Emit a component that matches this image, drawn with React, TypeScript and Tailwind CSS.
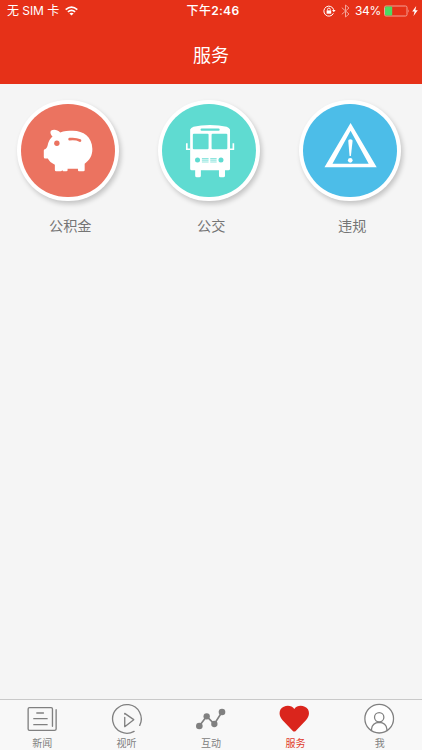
import type { ReactNode } from "react";

const services = [
  { label: "公积金", color: "bg-[#eb7360]", icon: <PiggyIcon /> },
  { label: "公交", color: "bg-[#5fdbd1]", icon: <BusIcon /> },
  { label: "违规", color: "bg-[#4cbde8]", icon: <WarningIcon /> },
];

const tabs = [
  { label: "新闻", icon: <NewsIcon /> },
  { label: "视听", icon: <PlayIcon /> },
  { label: "互动", icon: <ChartIcon /> },
  { label: "服务", icon: <HeartIcon />, active: true },
  { label: "我", icon: <UserIcon /> },
];

function PiggyIcon() {
  return (
    <svg viewBox="20 24 306 303" className="h-full w-full">
      <path
        fill="#fff"
        d="M121 116C128 111 141 112 149 121C160 117 173 116 187 116C218 116 244 134 245 170C245 190 237 203 222 214V234Q222 237 218 237H205Q202 237 202 233V229H171V234Q171 237 167 237H159Q156 237 155 233Q154 237 150 237H137Q133 237 133 233V217C122 212 116 207 112 199H104Q100 199 100 194V175Q100 171 105 170C110 167 111 161 113 153C116 144 121 138 126 133C121 129 118 121 121 116Z"
      />
      <circle cx="139" cy="153" r="8" fill="#eb7360" />
      <path d="M177 141Q196 139 208 145" fill="none" stroke="#eb7360" strokeWidth="8" strokeLinecap="round" />
    </svg>
  );
}

function BusIcon() {
  return (
    <svg viewBox="20 24 306 303" className="h-full w-full">
      <path
        fill="#fff"
        d="M116 112Q118 107 126 104Q147 99 175 99Q203 99 225 104Q233 107 235 112V229Q235 234 230 234H220V250Q220 255 215 255H207Q202 255 202 250V234H148V250Q148 255 143 255H136Q131 255 131 250V234H121Q116 234 116 229Z"
      />
      <path d="M116 171H106V153M235 171H245V153" fill="none" stroke="#fff" strokeWidth="5" />
      <g fill="#5fdbd1">
        <rect x="147" y="109" width="57" height="7" rx="3" />
        <rect x="124" y="125" width="47" height="46" rx="3" />
        <rect x="180" y="125" width="47" height="46" rx="3" />
        <circle cx="138" cy="203" r="7.5" />
        <circle cx="208" cy="203" r="7.5" />
      </g>
      <path
        d="M151 199H171M151 204H171M151 209H171M176 199H195M176 204H195M176 209H195"
        stroke="#8fe5de"
        strokeWidth="3.5"
      />
    </svg>
  );
}

function WarningIcon() {
  return (
    <svg viewBox="20 24 306 303" className="h-full w-full">
      <path fill="#fff" fillRule="evenodd" d="M174 93L252 225H96ZM174 116L120 214H228Z" />
      <path fill="#fff" d="M167 146Q167 141 173 141Q180 141 180 146L175 191H171Z" />
      <circle cx="173" cy="204" r="7" fill="#fff" />
    </svg>
  );
}

function NewsIcon() {
  return (
    <svg viewBox="78.6 24 96 96" className="size-8" fill="none" stroke="currentColor" strokeWidth="4" strokeLinecap="round">
      <path d="M169 44V102Q169 106 164 106H89Q85 106 85 102V42Q85 38 89 38H154Q158 38 158 42V94" strokeLinejoin="round" />
      <path d="M111 54H131M102 71H142M102 89H142" />
    </svg>
  );
}

function PlayIcon() {
  return (
    <svg viewBox="331.8 24 96 96" className="size-8" fill="none" stroke="currentColor" strokeWidth="4" strokeLinecap="round">
      <path d="M401 109A43 43 0 1 1 418 91" />
      <path d="M373 67V95L400 74L373 55V57" strokeLinejoin="round" />
    </svg>
  );
}

function ChartIcon() {
  return (
    <svg viewBox="195 24 96 96" className="size-8" fill="currentColor">
      <path d="M208 93L230 64L253 87L276 51" fill="none" stroke="currentColor" strokeWidth="5" />
      <circle cx="208" cy="93" r="10" />
      <circle cx="230" cy="64" r="9.5" />
      <circle cx="253" cy="87" r="9.5" />
      <circle cx="276" cy="51" r="10" />
    </svg>
  );
}

function HeartIcon() {
  return (
    <svg viewBox="28.2 24 96 96" className="size-8" fill="#da251c">
      <path d="M74 42C65 28 42 30 33 43C27 54 30 66 39 76L69 107Q74 112 79 107L109 76C118 66 121 54 115 43C106 30 83 28 74 42Z" />
    </svg>
  );
}

function UserIcon() {
  return (
    <svg viewBox="281.4 24 96 96" className="size-8" fill="none" stroke="currentColor" strokeWidth="3.8">
      <circle cx="327" cy="71" r="43" fill="#fff" />
      <circle cx="327" cy="67" r="14" />
      <path d="M304 107V102Q306 83 327 82Q348 83 350 102V107" />
    </svg>
  );
}

function StatusBar() {
  return (
    <div className="grid h-[22px] grid-cols-[1fr_auto_1fr] items-center pl-[7px] pr-1 text-[12px] leading-none">
      <div className="flex items-center gap-[6px]">
        <span className="whitespace-pre text-[12px] tracking-[-0.05px]">无 SIM 卡</span>
        <svg viewBox="0 0 13 10" className="h-[10px] w-[13px]" fill="none" stroke="#fff" strokeWidth="1.7">
          <path d="M.7 3.6Q6.5-1.5 12.3 3.6M2.9 5.9Q6.5 2.7 10.1 5.9" />
          <path d="M6.5 9.5L4.4 7.5Q6.5 5.8 8.6 7.5Z" fill="#fff" stroke="none" />
        </svg>
      </div>
      <span className="pl-px font-medium tracking-[0.3px]">
        下午<b className="font-semibold">2:46</b>
      </span>
      <div className="flex items-center justify-end">
        <svg viewBox="0 0 13 12" className="h-3 w-[13px]" fill="none" stroke="#fff">
          <path d="M10.4 8.3A5 5 0 1 1 10.7 4.8" />
          <path d="M9 5H12.6L10.8 7.3Z" fill="#fff" stroke="none" />
          <rect x="3.6" y="5.4" width="4.6" height="3.3" fill="#fff" stroke="none" />
          <path d="M4.5 5.5V4.4Q4.5 3.1 5.9 3.1Q7.3 3.1 7.3 4.4V5.5" strokeWidth=".9" />
        </svg>
        <svg viewBox="0 0 9 14" className="ml-[5px] h-[14px] w-[9px] opacity-55" fill="none" stroke="#fff">
          <path d="M.8 3.7L8 10L4.5 13V1L8 4L.8 10.3" />
        </svg>
        <span className="ml-[5px] text-[12px] tracking-[-0.3px]">34%</span>
        <svg viewBox="0 0 26 12" className="ml-[3px] h-3 w-[26px]">
          <rect x=".5" y="1" width="22.5" height="10" rx="1.5" fill="none" stroke="#f3a095" />
          <rect x="1" y="1.5" width="7.2" height="9" rx="1" fill="#4cd964" />
          <path d="M24 4.3Q25.5 6 24 7.7Z" fill="#f3a095" />
        </svg>
        <svg viewBox="0 0 6 10" className="ml-[2px] h-[10px] w-[6px]" fill="#fff">
          <path d="M4.2 0L.2 5.5H2.6L1.5 10L5.8 4.2H3.4Z" />
        </svg>
      </div>
    </div>
  );
}

function ServiceItem({ label, color, icon }: { label: string; color: string; icon: ReactNode }) {
  return (
    <div className="flex flex-col items-center">
      <div className="mr-[5.5px] grid h-[101px] w-[102.5px] rounded-full bg-white shadow-[2px_3px_5px_rgba(0,0,0,0.2)]">
        <div className="col-start-1 row-start-1 p-1">
          <div className={`h-full w-full rounded-full ${color}`} />
        </div>
        <div className="col-start-1 row-start-1">{icon}</div>
      </div>
      <span className="mr-[0.5px] mt-[15px] text-[14.2px] leading-5 text-[#757575]">{label}</span>
    </div>
  );
}

export default function App() {
  return (
    <div className="flex h-[750px] w-[422px] flex-col overflow-hidden bg-[#f5f5f5] font-['Inter','Noto_Sans_CJK_SC',sans-serif]">
      <header className="h-[84px] bg-[#e63118] text-white">
        <StatusBar />
        <h1 className="pt-5 text-center text-[18px] leading-7">服务</h1>
      </header>

      <main className="-mr-px grid flex-1 grid-cols-3 content-start pt-4">
        {services.map((s) => (
          <ServiceItem key={s.label} {...s} />
        ))}
      </main>

      <nav className="grid h-[51px] grid-cols-5 border-t border-[#c9c9c9] bg-[#f8f8f8] pt-[3px]">
        {tabs.map((t) => (
          <div
            key={t.label}
            className={`flex flex-col items-center ${t.active ? "text-[#e0382a]" : "text-[#808080]"}`}
          >
            {t.icon}
            <span className="text-[10px] leading-4">{t.label}</span>
          </div>
        ))}
      </nav>
    </div>
  );
}
